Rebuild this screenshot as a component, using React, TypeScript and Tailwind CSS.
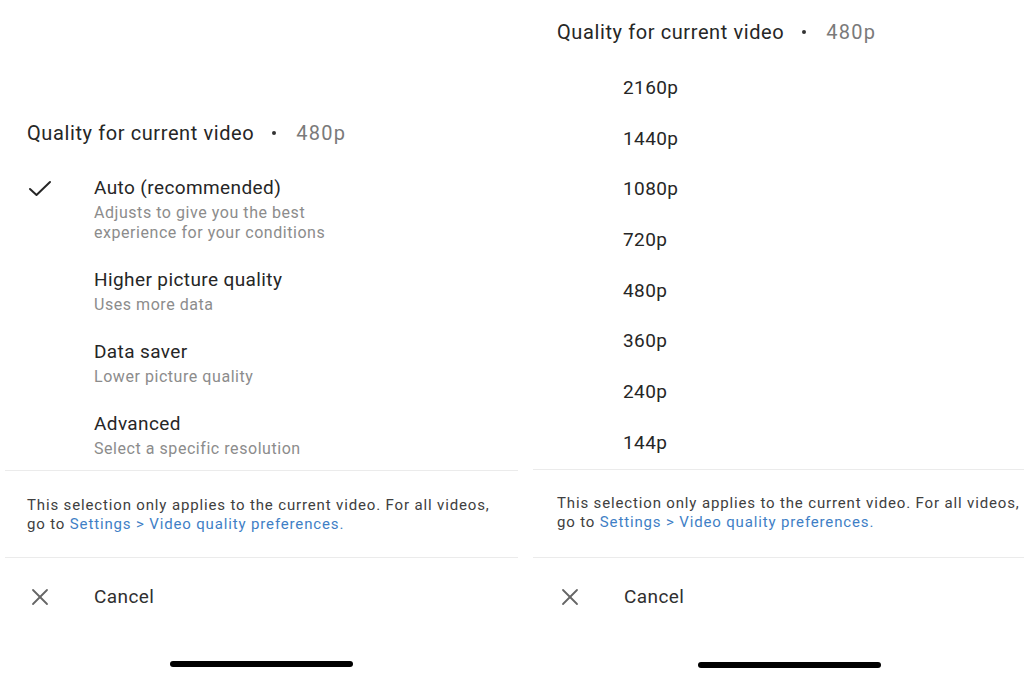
import { Fragment } from 'react';

const font = { fontFamily: 'Roboto, "Liberation Sans", sans-serif' };

const options = [
  { title: 'Auto (recommended)', sub: ['Adjusts to give you the best', 'experience for your conditions'], checked: true },
  { title: 'Higher picture quality', sub: ['Uses more data'] },
  { title: 'Data saver', sub: ['Lower picture quality'] },
  { title: 'Advanced', sub: ['Select a specific resolution'] },
];

const resolutions = ['2160p', '1440p', '1080p', '720p', '480p', '360p', '240p', '144p'];

function Title() {
  return (
    <div className="flex items-center h-[24px] text-[20px] leading-[24px] tracking-[0.6px] text-[#262626]">
      <span>Quality for current video</span>
      <span className="ml-[18px] mr-[20px] w-[4px] h-[4px] rounded-full bg-[#333]" />
      <span className="text-[#7a7a7a] tracking-[1.2px]">480p</span>
    </div>
  );
}

function CheckIcon() {
  return (
    <svg width="24" height="18" viewBox="0 0 24 18" fill="none" stroke="#262626" strokeWidth="2" strokeLinecap="round" strokeLinejoin="round">
      <polyline points="2,9 8.5,15 22,2" />
    </svg>
  );
}

function CloseIcon() {
  return (
    <svg width="18" height="18" viewBox="0 0 18 18" fill="none" stroke="#666" strokeWidth="1.8" strokeLinecap="round">
      <line x1="2" y1="2" x2="16" y2="16" />
      <line x1="16" y1="2" x2="2" y2="16" />
    </svg>
  );
}

// footer note, lines broken as in the screenshot
function Note() {
  return (
    <div className="text-[15px] leading-[19px] tracking-[0.85px] text-[#404040] whitespace-nowrap">
      This selection only applies to the current video. For all videos,
      <br />
      go to <span className="text-[#3f7fc6]">Settings &gt; Video quality preferences.</span>
    </div>
  );
}

function CancelRow({ pad }: { pad: string }) {
  return (
    <div className={`flex items-center h-[22px] ${pad}`}>
      <div className="w-[67px] flex items-center pl-[4px]">
        <CloseIcon />
      </div>
      <span className="text-[19px] leading-[22px] tracking-[0.4px] text-[#303030]">Cancel</span>
    </div>
  );
}

export default function App() {
  return (
    <div className="w-[1024px] h-[689px] bg-white flex overflow-hidden" style={font}>
      {/* left sheet */}
      <div className="ml-[5px] w-[513px] flex flex-col">
        <div className="pl-[22px] pt-[121px]">
          <Title />
        </div>
        <div className="pl-[22px] mt-[32px] flex flex-col gap-[26px]">
          {options.map((o) => (
            <div key={o.title} className="flex">
              <div className="w-[67px] pt-[3px] pl-[1px]">{o.checked && <CheckIcon />}</div>
              <div>
                <div className="text-[19px] leading-[22px] tracking-[0.4px] text-[#262626]">{o.title}</div>
                <div className="mt-[4px] text-[16px] leading-[20px] tracking-[0.55px] text-[#8c8c8c]">
                  {o.sub.map((s, i) => (
                    <Fragment key={s}>
                      {i > 0 && <br />}
                      {s}
                    </Fragment>
                  ))}
                </div>
              </div>
            </div>
          ))}
        </div>
        <div className="mt-[11px] border-t border-[#ebebeb]" />
        <div className="pl-[22px] mt-[25px]">
          <Note />
        </div>
        <div className="mt-[23px] border-t border-[#ebebeb]" />
        <div className="mt-[28px]">
          <CancelRow pad="pl-[22px]" />
        </div>
        <div className="mt-[53px] ml-[165px] w-[183px] h-[6px] rounded-full bg-black" />
      </div>

      {/* right sheet */}
      <div className="ml-[15px] flex-1 flex flex-col">
        <div className="pl-[24px] pt-[20px]">
          <Title />
        </div>
        <div className="pl-[90px] mt-[33px] flex flex-col gap-[28.7px]">
          {resolutions.map((r) => (
            <div key={r} className="text-[19px] leading-[22px] tracking-[0.4px] text-[#262626]">
              {r}
            </div>
          ))}
        </div>
        <div className="mt-[15px] border-t border-[#ebebeb]" />
        <div className="pl-[24px] mt-[24px]">
          <Note />
        </div>
        <div className="mt-[25px] border-t border-[#ebebeb]" />
        <div className="mt-[28px]">
          <CancelRow pad="pl-[24px]" />
        </div>
        <div className="mt-[54px] ml-[165px] w-[183px] h-[6px] rounded-full bg-black" />
      </div>
    </div>
  );
}
